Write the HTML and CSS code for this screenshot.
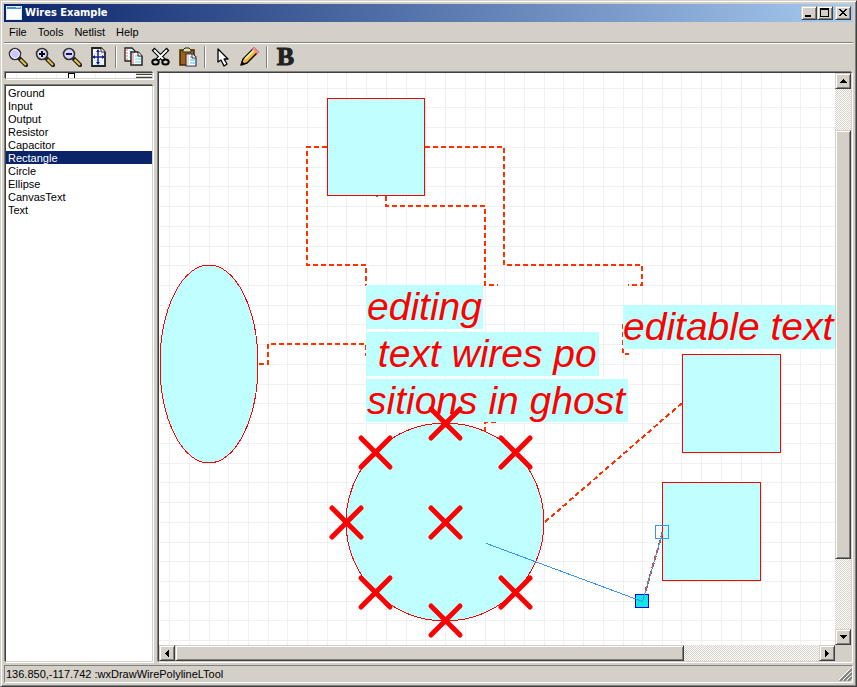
FILE: index.html
```html
<!DOCTYPE html>
<html lang="en">
<head>
    <meta charset="UTF-8">
    <meta name="viewport" content="width=device-width, initial-scale=1.0">
    <title>Wires Example</title>
    <link rel="stylesheet" href="styles.css">
</head>
<body>
    <div class="window">
        <header class="title-bar">
            <svg class="app-icon" width="16" height="14" shape-rendering="crispEdges">
                <rect x="0" y="0" width="16" height="14" fill="#d8ecf8"/>
                <rect x="1" y="1" width="14" height="2" fill="#4a90dc"/>
                <rect x="10" y="1" width="4" height="1" fill="#a8d8f8"/>
                <rect x="1" y="3" width="14" height="10" fill="#fff"/>
            </svg>
            <h1>Wires Example</h1>
            <div class="window-buttons">
                <button class="raised" aria-label="Minimize"><svg width="12" height="10" shape-rendering="crispEdges"><path d="M2 7h6v2h-6z"/></svg></button>
                <button class="raised" aria-label="Maximize"><svg width="12" height="10" shape-rendering="crispEdges"><path d="M1 0h9v9h-9zM2 2v6h7v-6z" fill-rule="evenodd"/></svg></button>
                <button class="raised close" aria-label="Close"><svg width="12" height="10" shape-rendering="crispEdges"><path d="M2 1h2v1h1v1h2v-1h1v-1h2v1h-1v1h-1v1h-1v1h1v1h1v1h1v1h-2v-1h-1v-1h-2v1h-1v1h-2v-1h1v-1h1v-1h1v-1h-1v-1h-1v-1h-1z"/></svg></button>
            </div>
        </header>

        <nav class="menu-bar">
            <button>File</button>
            <button>Tools</button>
            <button>Netlist</button>
            <button>Help</button>
        </nav>

        <div class="tool-bar">
            <button class="tool" aria-label="Zoom">
                <svg width="20" height="20"><path d="M12 12l6 6" stroke="#222" stroke-width="4.500" stroke-linecap="round"/><path d="M12.500 12.500l5.500 5.500" stroke="#e8c440" stroke-width="2"/><circle cx="7" cy="7" r="5.500" fill="#ccc4fc" stroke="#333" stroke-width="1.600"/><circle cx="7" cy="7" r="4.300" fill="none" stroke="#fff"/></svg>
            </button>
            <button class="tool" aria-label="Zoom in">
                <svg width="20" height="20"><path d="M12 12l6 6" stroke="#222" stroke-width="4.500" stroke-linecap="round"/><path d="M12.500 12.500l5.500 5.500" stroke="#e8c440" stroke-width="2"/><circle cx="7" cy="7" r="5.500" fill="#dcd6fc" stroke="#333" stroke-width="1.600"/><path d="M4 7h6M7 4v6" stroke="#000" stroke-width="2"/></svg>
            </button>
            <button class="tool" aria-label="Zoom out">
                <svg width="20" height="20"><path d="M12 12l6 6" stroke="#222" stroke-width="4.500" stroke-linecap="round"/><path d="M12.500 12.500l5.500 5.500" stroke="#e8c440" stroke-width="2"/><circle cx="7" cy="7" r="5.500" fill="#dcd6fc" stroke="#333" stroke-width="1.600"/><path d="M4 7h6" stroke="#10106c" stroke-width="2"/></svg>
            </button>
            <button class="tool" aria-label="Fit page">
                <svg width="20" height="20"><path d="M3 1h9l4 4v14h-13z" fill="#fff" stroke="#222" stroke-width="1.800"/><path d="M4 7h11M4 14h11M4 17h11" stroke="#a8ecf4"/><path d="M12 1v4h4" fill="#fff" stroke="#222"/><path d="M9 3v14M4 10h11" stroke="#1c1c9c" stroke-width="1.500"/><path d="M9 2l-2 3h4zM9 18l-2-3h4zM3 10l3-2v4zM16 10l-3-2v4z" fill="#1c1c9c"/></svg>
            </button>
            <span class="separator"></span>
            <button class="tool" aria-label="Copy">
                <svg width="20" height="20"><path d="M1 1h7l3 3v10h-10z" fill="#fff" stroke="#222" stroke-width="1.300"/><path d="M3 2v11" stroke="#f49c9c" stroke-width="1.500" stroke-dasharray="2 1"/><path d="M5 4h5M5 7h5M5 10h5" stroke="#90e4f0"/><path d="M7 5h7l4 4v9h-11z" fill="#fff" stroke="#222" stroke-width="1.500"/><path d="M9 6v11" stroke="#f49c9c" stroke-width="1.500"/><path d="M11 9h6M11 12h6M11 15h6" stroke="#90e4f0" stroke-width="1.500"/><path d="M14 5v4h4" fill="#fff" stroke="#222"/></svg>
            </button>
            <button class="tool" aria-label="Cut">
                <svg width="20" height="20"><path d="M2 2l11 11M17 2l-11 11" stroke="#000" stroke-width="4"/><path d="M3 3l10 10M16 3l-10 10" stroke="#fff" stroke-width="1.800"/><ellipse cx="4.500" cy="15" rx="3.200" ry="2.600" fill="#d4d0c8" stroke="#000" stroke-width="2"/><ellipse cx="14.500" cy="15" rx="3.200" ry="2.600" fill="#d4d0c8" stroke="#000" stroke-width="2"/></svg>
            </button>
            <button class="tool" aria-label="Paste">
                <svg width="20" height="20"><path d="M2 3h14v15h-14z" fill="#9c6410" stroke="#3c2800" stroke-width="1.500"/><path d="M5 5v-2l2-2h4l2 2v2z" fill="#ece0a0" stroke="#222"/><path d="M8 7h7l3 3v9h-10z" fill="#fff" stroke="#335" stroke-width="1.200"/><path d="M10 8v10" stroke="#f49c9c"/><path d="M12 10h5M12 13h5M12 16h5" stroke="#70dcec" stroke-width="1.600"/><path d="M14 7v4h4" fill="#fff" stroke="#335"/></svg>
            </button>
            <span class="separator"></span>
            <button class="tool" aria-label="Select">
                <svg width="20" height="20"><path d="M5 2v13l3-2 3 6 3-2-3-5h4z" fill="#fff" stroke="#000" stroke-width="1.300" stroke-linejoin="round"/></svg>
            </button>
            <button class="tool" aria-label="Draw">
                <svg width="20" height="20"><path d="M1 18l2-6 11-11 4 4-11 11z" fill="#f0b838" stroke="#000" stroke-width="1.400" stroke-linejoin="round"/><path d="M5 12l9-9" stroke="#fce890" stroke-width="1.800"/><path d="M13 2l1-1 4 4-1 1z" fill="#f48c94" stroke="#f48c94" stroke-width="1.500"/><path d="M1 18l1-4 3 3z" fill="#000"/></svg>
            </button>
            <span class="separator"></span>
            <button class="tool bold" aria-label="Bold">B</button>
        </div>

        <main class="workspace">
            <aside class="sidebar">
                <div class="preview sunken">
                    <svg class="preview-page" shape-rendering="crispEdges">
                        <path d="M10 0v5M30 0v5M50 0v5M70 0v5M89 0v5M109 0v5M128 0v5" stroke="#f0f0f0"/>
                        <path d="M62 0h7v6h-1v-5h-5v5h-1z" fill="#000"/>
                    </svg>
                    <div class="preview-scroll"></div>
                </div>
                <select class="shape-list sunken" size="10" aria-label="Shapes">
                    <option>Ground</option>
                    <option>Input</option>
                    <option>Output</option>
                    <option>Resistor</option>
                    <option>Capacitor</option>
                    <option selected>Rectangle</option>
                    <option>Circle</option>
                    <option>Ellipse</option>
                    <option>CanvasText</option>
                    <option>Text</option>
                </select>
            </aside>

            <section class="canvas-frame sunken">
                <div class="canvas">
                    <svg class="drawing">
                        <defs>
                            <path id="cross" d="M-14 -14L15 15M15 -14L-14 15"/>
                        </defs>
                        <g transform="translate(-158.500 -72.500)">
                            <path class="grid" d="M169 0V2000M189 0V2000M209 0V2000M228 0V2000M248 0V2000M268 0V2000M287 0V2000M307 0V2000M327 0V2000M346 0V2000M366 0V2000M386 0V2000M406 0V2000M425 0V2000M445 0V2000M465 0V2000M485 0V2000M504 0V2000M524 0V2000M544 0V2000M563 0V2000M583 0V2000M603 0V2000M623 0V2000M642 0V2000M662 0V2000M681 0V2000M701 0V2000M721 0V2000M741 0V2000M761 0V2000M781 0V2000M800 0V2000M820 0V2000"/>
                            <path class="grid" d="M0 88H2000M0 107H2000M0 127H2000M0 147H2000M0 167H2000M0 186H2000M0 206H2000M0 226H2000M0 246H2000M0 265H2000M0 285H2000M0 305H2000M0 324H2000M0 344H2000M0 364H2000M0 384H2000M0 403H2000M0 423H2000M0 443H2000M0 463H2000M0 482H2000M0 502H2000M0 522H2000M0 542H2000M0 561H2000M0 581H2000M0 601H2000M0 620H2000M0 640H2000"/>
                        </g>

                        <!-- wires -->
                        <g class="wires" transform="translate(-159 -73)">
                            <path d="M327 147H307V265H366V286"/>
                            <path d="M425 147H504V265H642V285H628"/>
                            <path d="M376 196H378M386 196V206H485V285H498"/>
                            <path d="M259 364H268V344H366V356"/>
                            <path d="M623 324V354H629"/>
                            <path d="M485 432V422H498"/>
                            <path d="M545 522L682 403"/>
                        </g>

                        <!-- shapes -->
                        <g class="shapes" transform="translate(-158.500 -72.500)">
                            <rect x="327" y="98" width="97" height="97"/>
                            <rect x="682" y="354" width="98" height="98"/>
                            <rect x="662" y="482" width="98" height="98"/>
                        </g>
                        <g class="shapes" transform="translate(-159 -73)">
                            <ellipse cx="209" cy="364" rx="49" ry="99"/>
                            <circle cx="445" cy="522" r="99"/>
                        </g>

                        <g transform="translate(-159 -73)">
                            <rect class="text-back" x="366" y="285" width="117" height="44"/>
                            <rect class="text-back" x="366" y="332" width="233" height="44"/>
                            <rect class="text-back" x="366" y="379" width="262" height="43"/>
                            <rect class="text-back" x="623" y="305" width="214" height="44"/>
                            <text class="label" x="367" y="320">editing</text>
                            <text class="label" x="367" y="367"> text wires po</text>
                            <text class="label" x="367" y="414">sitions in ghost</text>
                            <text class="label" x="623" y="340">editable text</text>
                        </g>

                        <g class="crosses" transform="translate(-159 -73)">
                            <use href="#cross" x="445" y="423"/>
                            <use href="#cross" x="375" y="452"/>
                            <use href="#cross" x="515" y="452"/>
                            <use href="#cross" x="346" y="522"/>
                            <use href="#cross" x="445" y="522"/>
                            <use href="#cross" x="375" y="592"/>
                            <use href="#cross" x="515" y="592"/>
                            <use href="#cross" x="445" y="620"/>
                        </g>

                        <!-- wire being drawn -->
                        <g transform="translate(-158.500 -72.500)">
                            <path class="wires" d="M662 532L642 601"/>
                            <rect class="handle" x="635" y="594" width="13" height="13"/>
                            <path class="guide" d="M486 543L642 601L662 532"/>
                            <rect class="guide" x="655" y="525" width="13" height="13"/>
                        </g>
                    </svg>
                </div>
                <div class="scrollbar vertical">
                    <button class="raised" aria-label="Scroll up"><svg width="7" height="4" shape-rendering="crispEdges"><path d="M3 0h1v1h1v1h1v1h1v1h-7v-1h1v-1h1v-1h1z"/></svg></button>
                    <div class="track">
                        <div class="thumb raised"></div>
                    </div>
                    <button class="raised" aria-label="Scroll down"><svg width="7" height="4" shape-rendering="crispEdges"><path d="M0 0h7v1h-1v1h-1v1h-1v1h-1v-1h-1v-1h-1v-1h-1z"/></svg></button>
                </div>
                <div class="scrollbar horizontal">
                    <button class="raised" aria-label="Scroll left"><svg width="4" height="7" shape-rendering="crispEdges"><path d="M4 0v7h-1v-1h-1v-1h-1v-1h-1v-1h1v-1h1v-1h1v-1z"/></svg></button>
                    <div class="track">
                        <div class="thumb raised"></div>
                    </div>
                    <button class="raised" aria-label="Scroll right"><svg width="4" height="7" shape-rendering="crispEdges"><path d="M0 0v7h1v-1h1v-1h1v-1h1v-1h-1v-1h-1v-1h-1v-1z"/></svg></button>
                </div>
            </section>
        </main>

        <footer class="status-bar">
            <span>136.850,-117.742 :wxDrawWirePolylineLTool</span>
            <svg class="grip" width="13" height="13">
                <path d="M1 13L13 1M5 13L13 5M9 13L13 9" stroke="#808080" stroke-width="2"/>
                <path d="M0 12L12 0M4 12L12 4M8 12L12 8" stroke="#fff"/>
            </svg>
        </footer>
    </div>
</body>
</html>
```
FILE: styles.css
```css
* {
    box-sizing: border-box;
}

body {
    margin: 0;
    font-family: "Liberation Sans", Arial, sans-serif;
    font-size: 11px;
    color: #000;
    background: #d4d0c8;
}

button, select {
    font: inherit;
    color: inherit;
    margin: 0;
    border-radius: 0;
}

button {
    padding: 0;
    border: none;
    background: #d4d0c8;
    display: flex;
    align-items: center;
    justify-content: center;
}

svg {
    display: block;
}

.window {
    height: 100vh;
    display: flex;
    flex-direction: column;
    padding: 3px;
    border: 1px solid;
    border-color: #d4d0c8 #404040 #404040 #d4d0c8;
    box-shadow: inset 1px 1px #fff, inset -1px -1px #808080;
}

.raised {
    background: #d4d0c8;
    border: 1px solid;
    border-color: #d4d0c8 #404040 #404040 #d4d0c8;
    box-shadow: inset 1px 1px #fff, inset -1px -1px #808080;
}

.sunken {
    margin: 1px;
    background: #fff;
    border: 1px solid;
    border-color: #404040 #d4d0c8 #d4d0c8 #404040;
    box-shadow: 1px 1px #fff, -1px -1px #808080;
    outline: none;
}

/* title */
.title-bar {
    display: flex;
    align-items: center;
    height: 18px;
    padding: 0 2px;
    gap: 3px;
    background: linear-gradient(to right, #0a246a, #a6caf0);
}

.title-bar h1 {
    margin: 0;
    flex: 1;
    font-family: "DejaVu Sans Condensed", "DejaVu Sans", sans-serif;
    font-size: 11px;
    line-height: 18px;
    color: #fff;
}

.window-buttons {
    display: flex;
}

.window-buttons button {
    width: 16px;
    height: 14px;
}

.window-buttons .close {
    margin-left: 2px;
}

/* menu */
.menu-bar {
    display: flex;
    gap: 11px;
    height: 21px;
    padding: 0 5px;
    border-bottom: 1px solid #808080;
}

.tool-bar {
    display: flex;
    align-items: center;
    height: 28px;
    padding-bottom: 2px;
    border-top: 1px solid #fff;
}

.tool {
    width: 27px;
    height: 24px;
}

.separator {
    width: 2px;
    height: 22px;
    margin: 0 3px;
    border-left: 1px solid #808080;
    border-right: 1px solid #fff;
}

.bold {
    width: 29px;
    font-family: "Liberation Serif", serif;
    font-size: 26px;
    font-weight: bold;
    color: #222;
    -webkit-text-stroke: 1px #222;
}

/* workspace */
.workspace {
    flex: 1;
    min-height: 0;
    display: flex;
    gap: 3px;
}

.sidebar {
    width: 150px;
    display: flex;
    flex-direction: column;
    gap: 4px;
}

.preview {
    display: flex;
    height: 7px;
}

.preview-page {
    flex: 1;
    min-width: 0;
    height: 5px;
}

.preview-scroll {
    width: 16px;
    background: linear-gradient(#d4d0c8 1px, #404040 1px 2px, #fff 2px 3px, #d4d0c8 3px 4px, #404040 4px);
}

.shape-list.sunken {
    flex: 1;
    padding: 0;
    overflow: hidden;
}

.shape-list option {
    height: 13px;
    min-height: 13px;
    padding: 1px 2px 0;
    line-height: 13px;
}

.shape-list option:checked {
    color: #fff;
    background: #0a246a linear-gradient(#0a246a, #0a246a);
}

.canvas-frame {
    flex: 1;
    min-width: 0;
    display: grid;
    grid-template-columns: 1fr 16px;
    grid-template-rows: 1fr 16px;
    background: #d4d0c8;
}

.canvas {
    min-width: 0;
    min-height: 0;
    overflow: hidden;
    background: #fff;
}

.drawing {
    width: 100%;
    height: 100%;
    fill: none;
    shape-rendering: crispEdges;
}

.grid {
    stroke: #f0f0f0;
}

.wires {
    stroke: #ff3300;
    stroke-width: 2px;
    stroke-dasharray: 5 3;
}

.shapes {
    fill: #c0ffff;
    stroke: #f00;
}

.text-back {
    fill: #c0ffff;
}

.label {
    fill: #f00;
    font-size: 39px;
    font-style: italic;
    white-space: pre;
}

.crosses {
    stroke: #f00;
    stroke-width: 5px;
    stroke-linecap: round;
    shape-rendering: geometricPrecision;
}

.guide {
    stroke: #3c96e6;
}

.handle {
    fill: #10e8e8;
    stroke: #00f;
}

/* scrollbars */
.scrollbar {
    display: flex;
}

.scrollbar button {
    width: 16px;
    height: 16px;
}

.track {
    flex: 1;
    display: flex;
    background: repeating-conic-gradient(#fff 0 25%, #d4d0c8 0 50%) 0 0 / 2px 2px;
}

.vertical,
.vertical .track {
    flex-direction: column;
}

.vertical .track {
    padding-top: 41px;
}

.vertical .thumb {
    height: 86%;
}

.horizontal .thumb {
    width: 79%;
}

/* status */
.status-bar {
    display: flex;
    align-items: center;
    justify-content: space-between;
    height: 18px;
    margin-top: 2px;
    padding-left: 1px;
    border: 1px solid;
    border-color: #808080 #fff #fff #808080;
}
```
